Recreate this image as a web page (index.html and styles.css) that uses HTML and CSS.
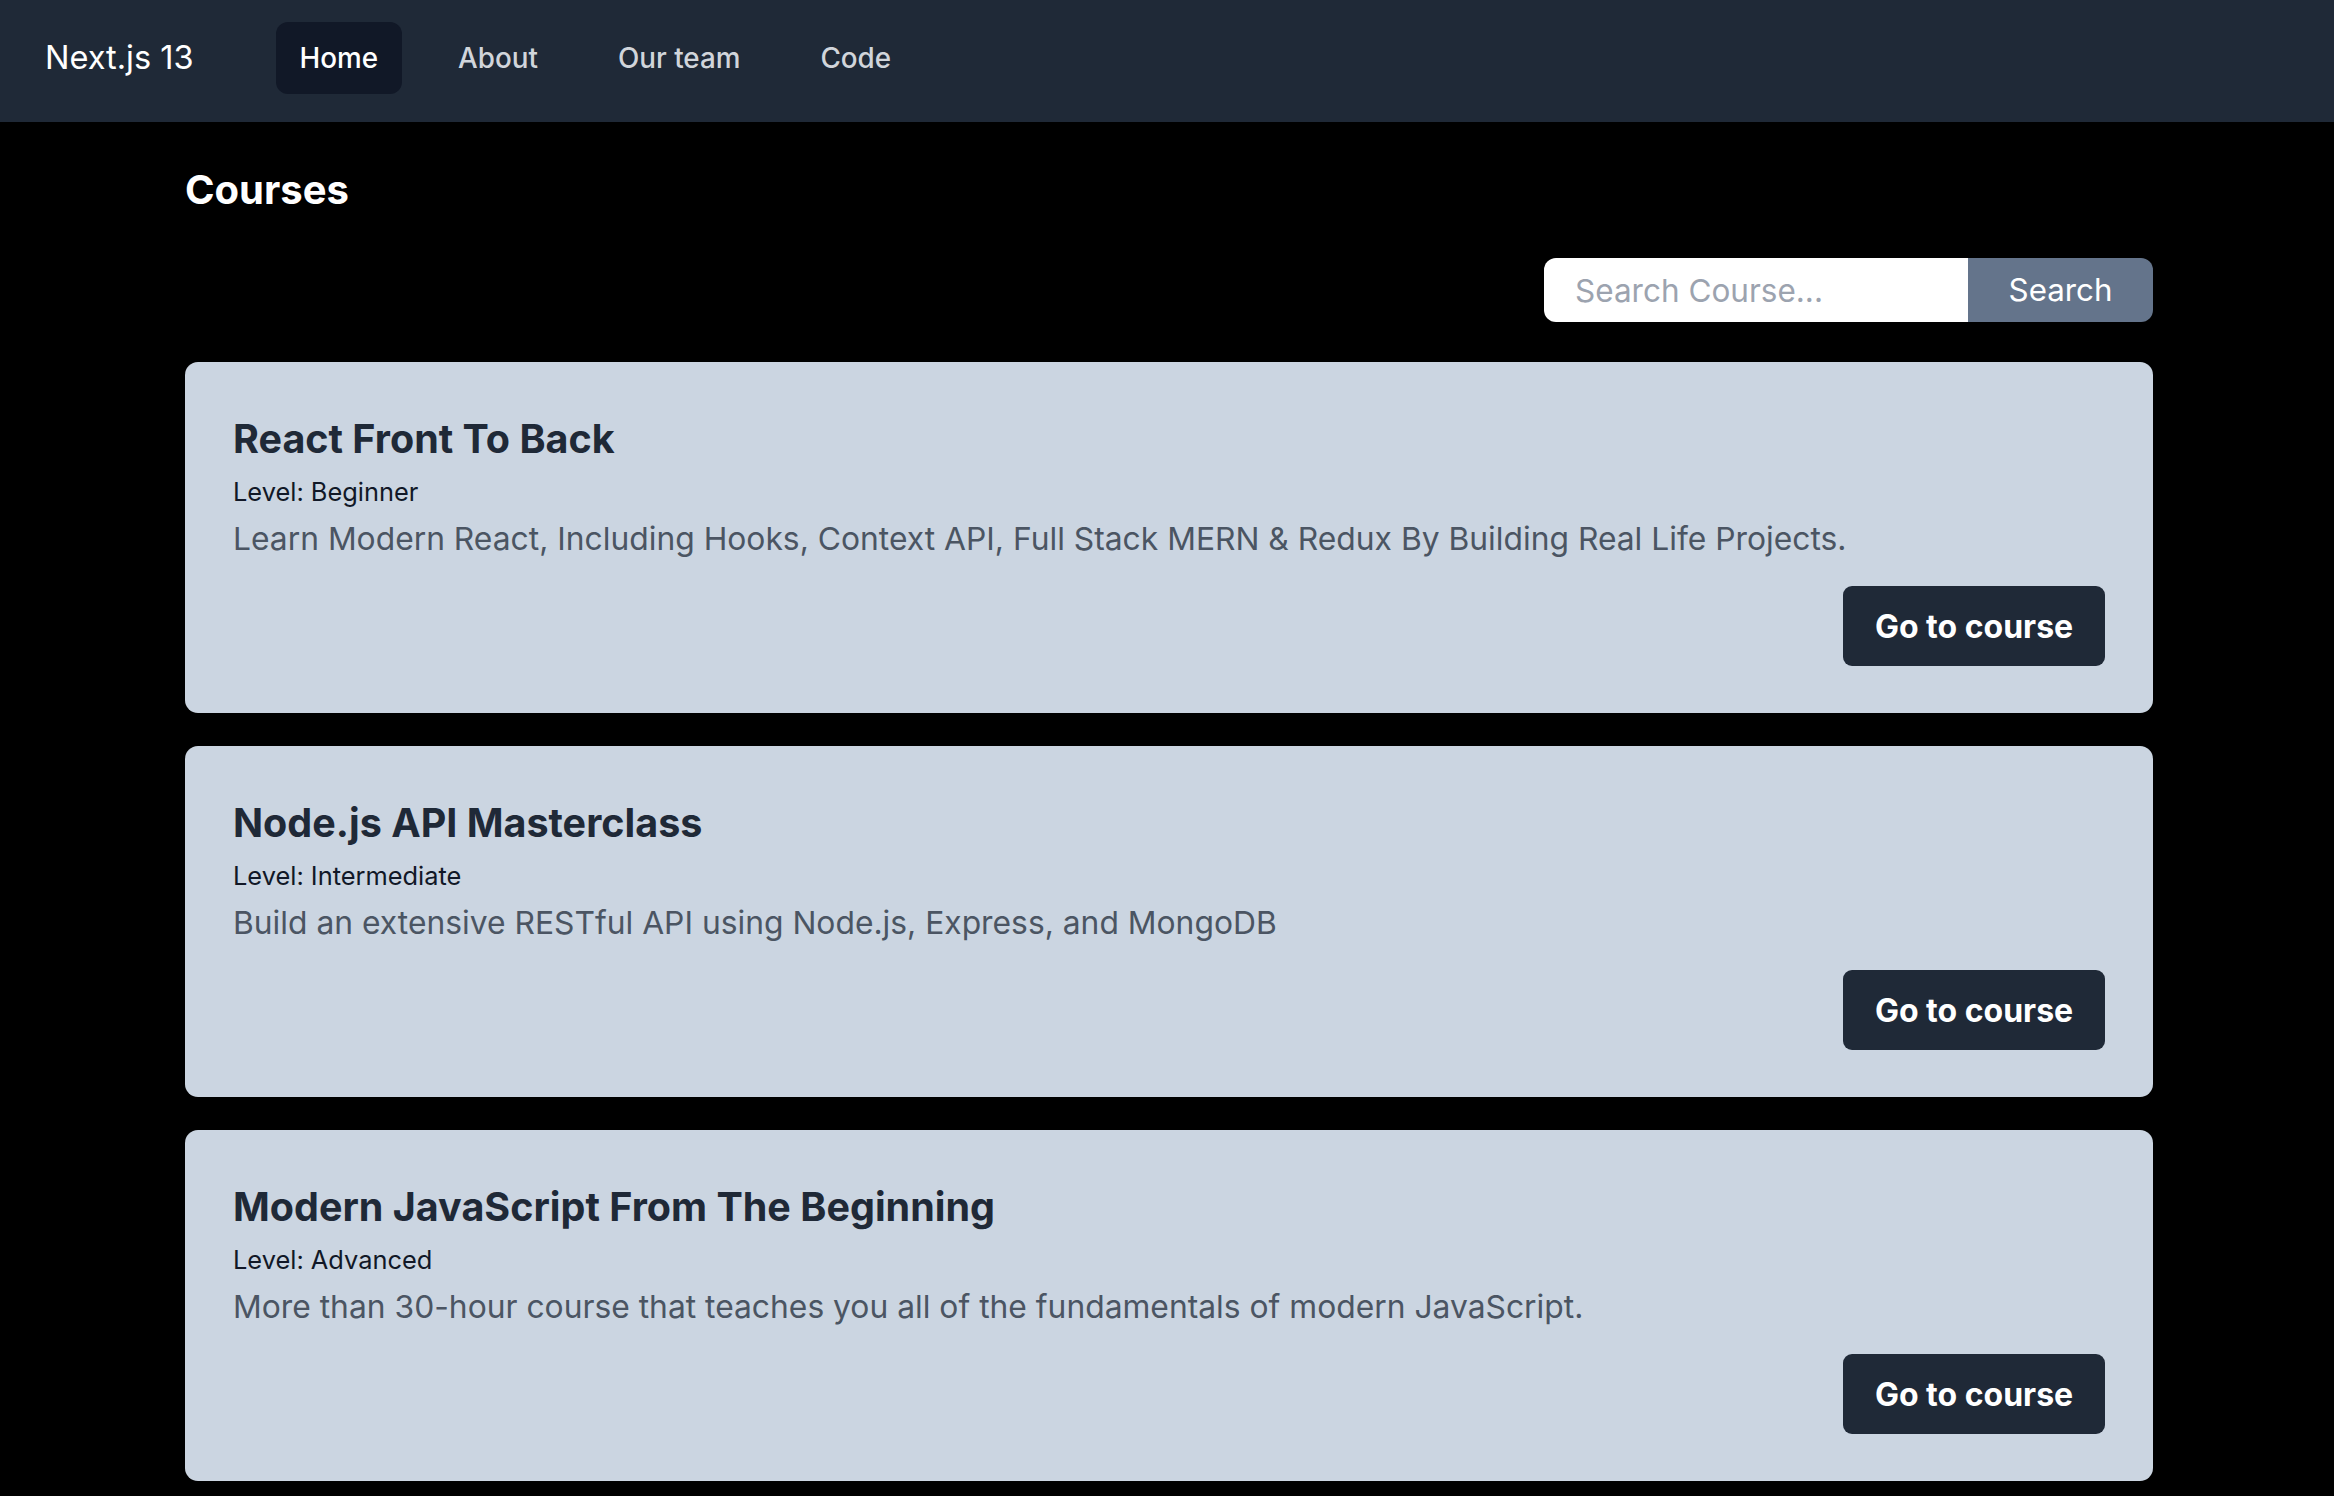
FILE: index.html
```html
<!DOCTYPE html>
<html lang="en">
<head>
<meta charset="utf-8">
<title>Next.js 13</title>
<link rel="stylesheet" href="styles.css">
</head>
<body>
<nav class="nav">
  <a class="logo" href="#">Next.js 13</a>
  <ul class="menu">
    <li><a class="menu-link active" href="#">Home</a></li>
    <li><a class="menu-link" href="#">About</a></li>
    <li><a class="menu-link" href="#">Our team</a></li>
    <li><a class="menu-link" href="#">Code</a></li>
  </ul>
</nav>
<main class="main">
  <h1 class="page-title">Courses</h1>
  <form class="search">
    <input class="search-input" type="text" placeholder="Search Course...">
    <button class="search-btn" type="button">Search</button>
  </form>
  <div class="course-list">
    <div class="card">
      <h2 class="card-title">React Front To Back</h2>
      <p class="card-level">Level: Beginner</p>
      <p class="card-desc">Learn Modern React, Including Hooks, Context API, Full Stack MERN &amp; Redux By Building Real Life Projects.</p>
      <div class="card-actions"><a class="card-btn" href="#">Go to course</a></div>
    </div>
    <div class="card">
      <h2 class="card-title">Node.js API Masterclass</h2>
      <p class="card-level">Level: Intermediate</p>
      <p class="card-desc">Build an extensive RESTful API using Node.js, Express, and MongoDB</p>
      <div class="card-actions"><a class="card-btn" href="#">Go to course</a></div>
    </div>
    <div class="card">
      <h2 class="card-title">Modern JavaScript From The Beginning</h2>
      <p class="card-level">Level: Advanced</p>
      <p class="card-desc">More than 30-hour course that teaches you all of the fundamentals of modern JavaScript.</p>
      <div class="card-actions"><a class="card-btn" href="#">Go to course</a></div>
    </div>
  </div>
</main>
</body>
</html>
```
FILE: styles.css
```css
* { box-sizing: border-box; }
html, body { margin: 0; padding: 0; }
body {
  background: #000;
  font-family: Inter, "Noto Sans", sans-serif;
  color: #fff;
}
a { text-decoration: none; color: inherit; }
ul { list-style: none; margin: 0; padding: 0; }
h1, h2, p { margin: 0; }

.nav {
  height: 122px;
  background: #1f2937;
  display: flex;
  align-items: flex-start;
  padding: 22px 45px 28px;
}
.logo {
  font-size: 32.5px;
  line-height: 42px;
  color: #fff;
  margin-top: 15px;
  margin-right: 82px;
}
.menu {
  display: flex;
  gap: 32px;
}
.menu-link {
  display: block;
  font-size: 27.8px;
  line-height: 42px;
  font-weight: 500;
  color: #d1d5db;
  padding: 15px 24px;
  border-radius: 12px;
}
.menu-link.active {
  background: #111827;
  color: #fff;
}

.main {
  margin: 0 181px 0 185px;
  padding-top: 44px;
}
.page-title {
  font-size: 40px;
  line-height: 48px;
  font-weight: 700;
  color: #fff;
  margin-bottom: 44px;
}
.search {
  display: flex;
  justify-content: flex-end;
  margin-bottom: 40px;
}
.search-input {
  width: 424px;
  height: 64px;
  border: none;
  outline: none;
  background: #fff;
  border-radius: 12px 0 0 12px;
  padding: 0 31px;
  font-family: inherit;
  font-size: 31.5px;
  color: #111827;
}
.search-input::placeholder { color: #9ca3af; }
.search-btn {
  width: 185px;
  height: 64px;
  border: none;
  background: #64748b;
  color: #fff;
  border-radius: 0 12px 12px 0;
  font-family: inherit;
  font-size: 31.3px;
  padding: 0;
}

.course-list {
  display: flex;
  flex-direction: column;
  gap: 33px;
}
.card {
  background: #cbd5e1;
  border-radius: 13px;
  padding: 48px 48px 47px;
}
.card-title {
  font-size: 39.5px;
  line-height: 56px;
  font-weight: 700;
  color: #1f2937;
  margin-top: 1px;
}
.card-level {
  font-size: 25.4px;
  line-height: 36px;
  color: #111827;
  margin-top: 7px;
}
.card-desc {
  font-size: 31.8px;
  line-height: 42px;
  color: #4b5563;
  margin-top: 8px;
}
.card-actions {
  display: flex;
  justify-content: flex-end;
  margin-top: 26px;
}
.card-btn {
  display: flex;
  align-items: center;
  justify-content: center;
  width: 262px;
  height: 80px;
  background: #1f2937;
  color: #fff;
  border-radius: 9px;
  font-size: 32px;
  font-weight: 700;
}
```
